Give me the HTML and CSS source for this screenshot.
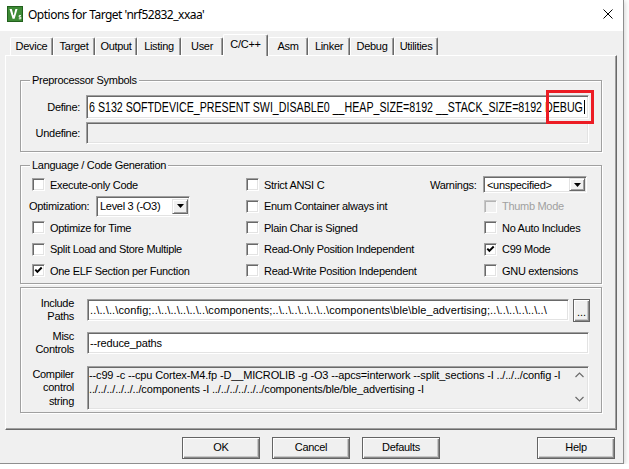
FILE: index.html
```html
<!DOCTYPE html>
<html lang="en">
<head>
    <meta charset="UTF-8">
    <title>Options for Target 'nrf52832_xxaa'</title>
    <link rel="stylesheet" href="styles.css">
</head>
<body>
    <div class="window">
        <div class="titlebar">
            <svg class="app-icon" viewBox="0 0 16 16">
                <rect x="0.5" y="0.5" width="15" height="15" fill="#3d8a35" stroke="#22601d"/>
                <path d="M2.5 3 L4.8 3 L6.6 9.4 L8.4 3 L10.5 3 L7.6 12.8 L5.6 12.8 Z" fill="#fff"/>
                <path d="M6.6 3.5 V8.5" stroke="#3d8a35" stroke-width="1"/>
                <path d="M14 9.6 H12.2 V11.2 H13.8 V12.8 H11.8" stroke="#fff" stroke-width="1" fill="none"/>
            </svg>
            <span class="title">Options for Target 'nrf52832_xxaa'</span>
            <svg class="close" viewBox="0 0 10 10">
                <path d="M0.5 0.5 L9.5 9.5 M9.5 0.5 L0.5 9.5" stroke="#000" stroke-width="1"/>
            </svg>
        </div>

        <div class="client">
            <div class="tabs">
                <div class="tab">Device</div>
                <div class="tab">Target</div>
                <div class="tab">Output</div>
                <div class="tab">Listing</div>
                <div class="tab">User</div>
                <div class="tab active">C/C++</div>
                <div class="tab">Asm</div>
                <div class="tab">Linker</div>
                <div class="tab">Debug</div>
                <div class="tab">Utilities</div>
            </div>

            <div class="panel">
                <!-- Preprocessor symbols -->
                <div class="group group-pre">
                    <div class="legend">Preprocessor Symbols</div>
                    <div class="pre-grid">
                        <div class="field-label">Define:</div>
                        <div class="define-wrap">
                            <div class="edit define">
                                <span class="define-text">6 S132 SOFTDEVICE_PRESENT SWI_DISABLE0 __HEAP_SIZE=8192 __STACK_SIZE=8192 DEBUG</span>
                            </div>
                            <span class="caret"></span>
                            <span class="highlight"></span>
                        </div>
                        <div class="field-label">Undefine:</div>
                        <div class="edit disabled"></div>
                    </div>
                </div>

                <!-- Language / code generation -->
                <div class="group group-lang">
                    <div class="legend">Language / Code Generation</div>
                    <div class="lang-grid">
                        <div class="check"><span class="box"></span>Execute-only Code</div>
                        <div class="check"><span class="box"></span>Strict ANSI C</div>
                        <div class="combo-row">
                            <span class="warn-label">Warnings:</span>
                            <div class="select select-warn">
                                <span>&lt;unspecified&gt;</span>
                                <span class="drop"><svg viewBox="0 0 7 4"><path d="M0 0 H7 L3.5 4 Z" fill="#000"/></svg></span>
                            </div>
                        </div>

                        <div class="combo-row">
                            <span class="opt-label">Optimization:</span>
                            <div class="select select-opt">
                                <span>Level 3 (-O3)</span>
                                <span class="drop"><svg viewBox="0 0 7 4"><path d="M0 0 H7 L3.5 4 Z" fill="#000"/></svg></span>
                            </div>
                        </div>
                        <div class="check"><span class="box"></span>Enum Container always int</div>
                        <div class="check indent disabled"><span class="box"></span>Thumb Mode</div>

                        <div class="check"><span class="box"></span>Optimize for Time</div>
                        <div class="check"><span class="box"></span>Plain Char is Signed</div>
                        <div class="check indent"><span class="box"></span>No Auto Includes</div>

                        <div class="check"><span class="box"></span>Split Load and Store Multiple</div>
                        <div class="check"><span class="box"></span>Read-Only Position Independent</div>
                        <div class="check indent"><span class="box"><svg viewBox="0 0 11 11"><path d="M2.3 4.6 L4.4 6.9 L8.7 2.5" stroke="#000" stroke-width="1.9" fill="none"/></svg></span>C99 Mode</div>

                        <div class="check"><span class="box"><svg viewBox="0 0 11 11"><path d="M2.3 4.6 L4.4 6.9 L8.7 2.5" stroke="#000" stroke-width="1.9" fill="none"/></svg></span>One ELF Section per Function</div>
                        <div class="check"><span class="box"></span>Read-Write Position Independent</div>
                        <div class="check indent"><span class="box"></span>GNU extensions</div>
                    </div>
                </div>

                <!-- Include paths, misc controls, compiler string -->
                <div class="group group-ctrl">
                    <div class="ctrl-row">
                        <div class="ctrl-label">Include<br>Paths</div>
                        <div class="edit grow paths">..\..\..\config;..\..\..\..\..\..\components;..\..\..\..\..\..\components\ble\ble_advertising;..\..\..\..\..\..\</div>
                        <div class="btn browse">...</div>
                    </div>
                    <div class="ctrl-row misc">
                        <div class="ctrl-label">Misc<br>Controls</div>
                        <div class="edit grow">--reduce_paths</div>
                    </div>
                    <div class="ctrl-row compiler">
                        <div class="ctrl-label tall">Compiler<br>control<br>string</div>
                        <div class="edit disabled memo">
                            <div class="memo-text">--c99 -c --cpu Cortex-M4.fp -D__MICROLIB -g -O3 --apcs=interwork --split_sections -I ../../../config -I<br>../../../../../../components -I ../../../../../../components/ble/ble_advertising -I</div>
                            <svg class="scroll" viewBox="0 0 17 42">
                                <path d="M4.5 10 L8.5 6 L12.5 10" stroke="#6b6b6b" stroke-width="1.2" fill="none"/>
                                <path d="M4.5 30 L8.5 34 L12.5 30" stroke="#6b6b6b" stroke-width="1.2" fill="none"/>
                            </svg>
                        </div>
                    </div>
                </div>
            </div>

            <div class="buttons">
                <div class="btn">OK</div>
                <div class="btn">Cancel</div>
                <div class="btn">Defaults</div>
                <div class="btn help">Help</div>
            </div>
        </div>
    </div>
</body>
</html>
```

FILE: styles.css
```css
* {
    box-sizing: border-box;
}
body {
    margin: 0;
    background-color: #ffffff;
    font-family: "Liberation Sans", Arial, sans-serif;
    font-size: 11px;
    letter-spacing: -0.3px;
    color: #000;
}
.window {
    width: 624px;
    height: 464px;
    display: flex;
    flex-direction: column;
    background-color: #f0f0f0;
    border-right: 1px solid #8e8e8e;
    border-bottom: 1px solid #8e8e8e;
    box-shadow: 1px 1px 5px rgba(0, 0, 0, 0.18);
}

/* title bar */
.titlebar {
    flex: none;
    height: 31px;
    display: flex;
    align-items: center;
    padding-left: 7px;
    background-color: #ffffff;
}
.app-icon {
    width: 16px;
    height: 16px;
    margin-top: -3px;
}
.title {
    margin-left: 5px;
    margin-top: -3px;
    font-family: "Noto Sans", "Segoe UI", sans-serif;
    font-size: 12px;
    letter-spacing: -0.5px;
}
.close {
    width: 10px;
    height: 10px;
    margin-left: auto;
    margin-right: 10px;
    margin-top: -3px;
}

/* client area */
.client {
    flex: 1;
    display: flex;
    flex-direction: column;
    padding: 3px 6px 0 5px;
}
.tabs {
    display: grid;
    grid-template-columns: 43px 42px 42px 44px 42px 45px 40px 42px 44px 44px;
    height: 21px;
    align-items: end;
    margin-left: 5px;
}
.tab {
    height: 18px;
    line-height: 17px;
    text-align: center;
    border-top: 1px solid #fff;
    border-left: 1px solid #fff;
    border-right: 1px solid #696969;
    border-radius: 2px 2px 0 0;
    box-shadow: inset -1px 0 0 #a0a0a0;
}
.tab.active {
    position: relative;
    z-index: 1;
    height: 22px;
    line-height: 18px;
    margin-bottom: -1px;
    background-color: #f0f0f0;
}
.panel {
    height: 375px;
    border-top: 1px solid #fff;
    border-left: 1px solid #fff;
    border-right: 1px solid #696969;
    border-bottom: 1px solid #696969;
    box-shadow: inset -1px -1px 0 #a0a0a0;
}

/* group boxes */
.group {
    margin: 0 14px;
    border: 1px solid #a0a0a0;
    box-shadow: inset 1px 1px 0 #fff, 1px 1px 0 #fff;
}
.legend {
    width: max-content;
    height: 13px;
    line-height: 13px;
    margin: -7px 0 0 9px;
    padding: 0 2px;
    background-color: #f0f0f0;
}
.group-pre {
    height: 72px;
    margin-top: 24px;
}
.group-lang {
    height: 119px;
    margin-top: 13px;
}
.group-ctrl {
    height: 126px;
    margin-top: 3px;
    padding-top: 9px;
}

/* edit fields */
.edit {
    height: 22px;
    line-height: 20px;
    padding: 0 2px;
    white-space: nowrap;
    overflow: hidden;
    letter-spacing: -0.15px;
    background-color: #fff;
    border: 1px solid;
    border-color: #a0a0a0 #fff #fff #a0a0a0;
    box-shadow: inset 1px 1px 0 #696969, inset -1px -1px 0 #e3e3e3;
}
.edit.paths {
    letter-spacing: 0.1px;
}
.edit.disabled {
    background-color: #f0f0f0;
}
.pre-grid {
    display: grid;
    grid-template-columns: 59px 503px;
    grid-template-rows: 24px 22px;
    column-gap: 6px;
    row-gap: 3px;
    align-items: center;
    margin-top: 8px;
}
.field-label {
    text-align: right;
}
.define-wrap {
    position: relative;
    height: 24px;
}
.define {
    height: 24px;
    line-height: 22px;
}
.define-text {
    display: inline-block;
    font-size: 15px;
    letter-spacing: 0;
    transform: scaleX(0.71);
    transform-origin: 0 50%;
}
.caret {
    position: absolute;
    left: 498px;
    top: 5px;
    width: 1px;
    height: 14px;
    background-color: #000;
}
.highlight {
    position: absolute;
    left: 460px;
    top: -5px;
    width: 48px;
    height: 34px;
    border: 3px solid #ec1c24;
}

/* language / code generation */
.lang-grid {
    display: grid;
    grid-template-columns: 214px 187px 1fr;
    grid-auto-rows: 21.5px;
    align-items: center;
    margin: 2px 0 0 8px;
}
.check {
    display: flex;
    align-items: center;
    gap: 5px;
    padding-left: 3px;
    white-space: nowrap;
}
.check.indent {
    padding-left: 54px;
}
.box {
    flex: none;
    width: 13px;
    height: 13px;
    display: flex;
    background-color: #fff;
    border: 1px solid;
    border-color: #a0a0a0 #fff #fff #a0a0a0;
    box-shadow: inset 1px 1px 0 #696969, inset -1px -1px 0 #e3e3e3;
}
.box svg {
    width: 11px;
    height: 11px;
}
.check.disabled {
    color: #a0a0a0;
}
.check.disabled .box {
    background-color: #f0f0f0;
    border-color: #c8c8c8 #fff #fff #c8c8c8;
    box-shadow: inset 1px 1px 0 #b4b4b4;
}
.combo-row {
    display: flex;
    align-items: center;
}
.opt-label {
    width: 67px;
}
.warn-label {
    width: 53px;
}
.select {
    display: flex;
    align-items: center;
    padding-left: 3px;
    background-color: #fff;
    border: 1px solid;
    border-color: #a0a0a0 #fff #fff #a0a0a0;
    box-shadow: inset 1px 1px 0 #696969, inset -1px -1px 0 #e3e3e3;
}
.select-opt {
    width: 94px;
    height: 21px;
}
.select-warn {
    width: 104px;
    height: 17px;
}
.drop {
    display: flex;
    align-items: center;
    justify-content: center;
    width: 16px;
    height: 15px;
    margin-left: auto;
    margin-right: 1px;
    background-color: #f0f0f0;
    border: 1px solid;
    border-color: #e3e3e3 #696969 #696969 #e3e3e3;
    box-shadow: inset 1px 1px 0 #fff, inset -1px -1px 0 #a0a0a0;
}
.select-warn .drop {
    height: 13px;
}
.drop svg {
    width: 7px;
    height: 4px;
}

/* include paths / misc / compiler string */
.ctrl-row {
    display: flex;
    align-items: center;
    padding-right: 12px;
}
.ctrl-row.misc {
    margin-top: 7px;
}
.ctrl-row.compiler {
    margin-top: 10px;
}
.ctrl-label {
    flex: none;
    width: 53px;
    margin-right: 13px;
    text-align: right;
    line-height: 13px;
}
.ctrl-label.tall {
    line-height: 13.5px;
}
.grow {
    flex: 1;
}
.memo {
    flex: 1;
    height: 44px;
    display: flex;
    padding: 1px 0 0 1px;
    line-height: 14px;
}
.memo-text {
    flex: 1;
    overflow: hidden;
}
.scroll {
    flex: none;
    width: 17px;
    height: 42px;
    margin-top: -1px;
}

/* push buttons */
.btn {
    width: 78px;
    height: 22px;
    line-height: 19px;
    text-align: center;
    background-color: #f0f0f0;
    border: 1px solid #646464;
    box-shadow: inset 1px 1px 0 #fff, inset -1px -1px 0 #8a8a8a, inset -2px -2px 0 #c8c8c8;
}
.browse {
    flex: none;
    width: 17px;
    height: 23px;
    margin-left: 4px;
    margin-right: -1px;
    line-height: 24px;
    letter-spacing: 0;
}
.buttons {
    display: flex;
    gap: 12px;
    margin-top: 7px;
    padding-left: 177px;
}
.help {
    margin-left: auto;
    margin-right: 2px;
}
```
